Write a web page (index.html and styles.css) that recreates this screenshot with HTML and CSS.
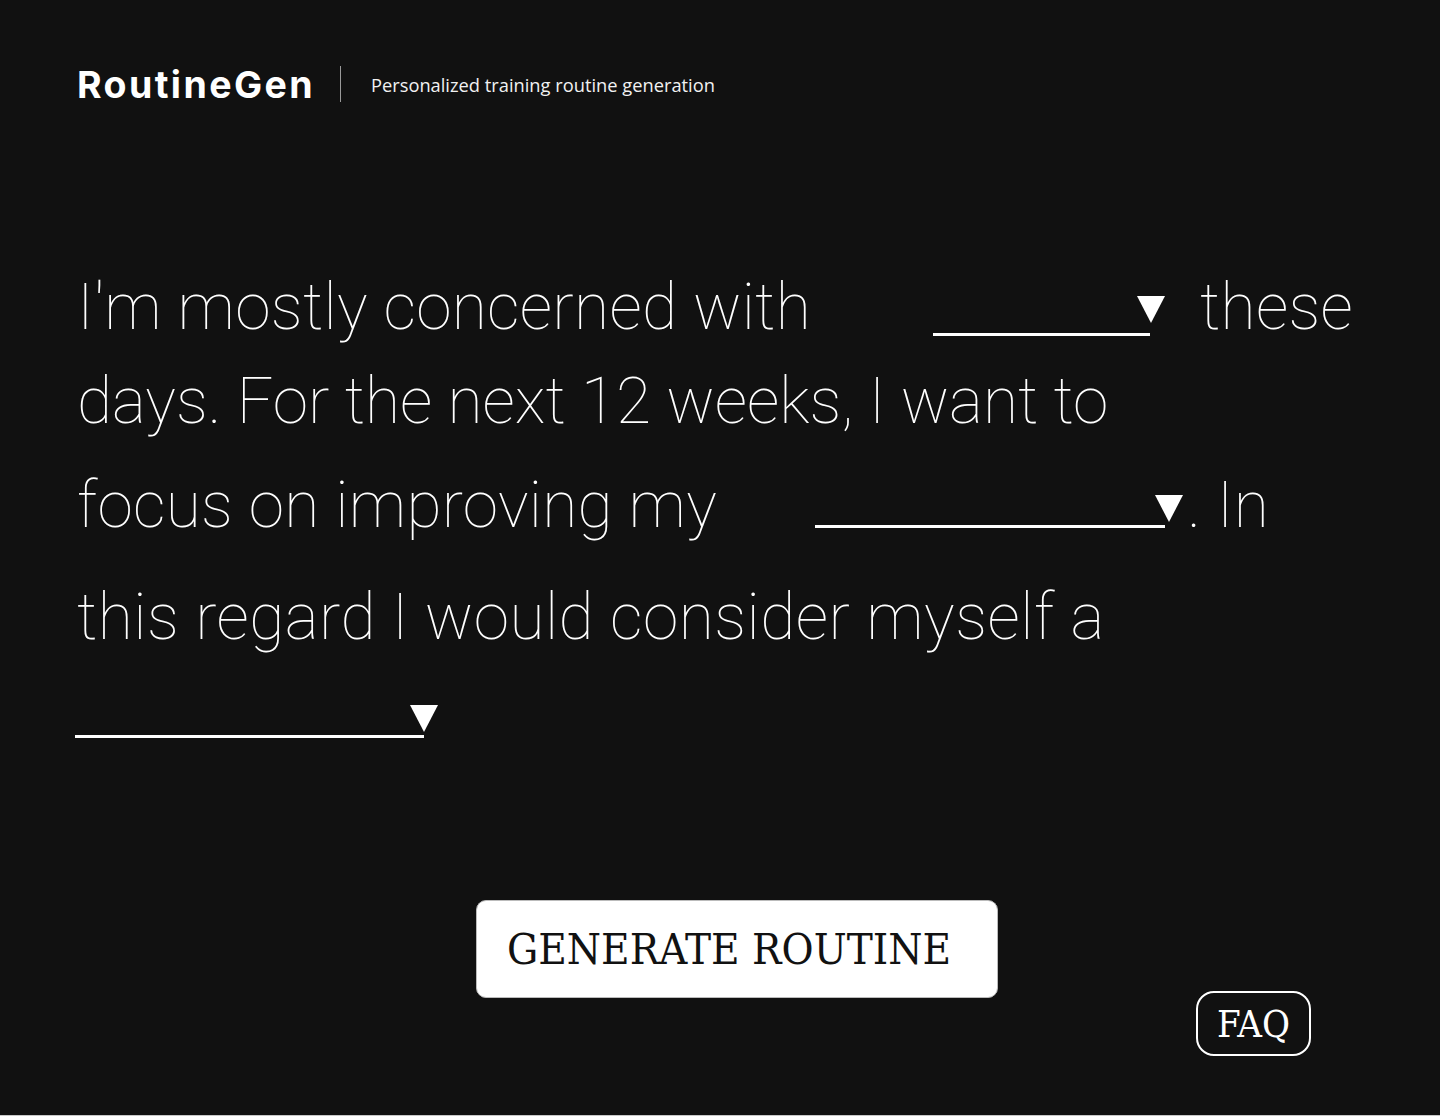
FILE: index.html
```html
<!DOCTYPE html>
<html lang="en">
<head>
<meta charset="utf-8">
<title>RoutineGen</title>
<link rel="stylesheet" href="styles.css">
</head>
<body>
<div class="page">
  <header class="header">
    <div class="brand">RoutineGen</div>
    <div class="sep"></div>
    <div class="tagline">Personalized training routine generation</div>
  </header>

  <div class="prompt">
    <div class="line l1">
      <span class="txt">I'm mostly concerned with</span>
      <span class="select s1"><span class="arrow"></span></span>
      <span class="txt after1">these</span>
    </div>
    <div class="line l2">
      <span class="txt">days. For the next 12 weeks, I want to</span>
    </div>
    <div class="line l3">
      <span class="txt">focus on improving my</span>
      <span class="select s3"><span class="arrow"></span></span>
      <span class="txt after3">. In</span>
    </div>
    <div class="line l4">
      <span class="txt">this regard I would consider myself a</span>
    </div>
    <div class="line l5">
      <span class="select s5"><span class="arrow"></span></span>
    </div>
  </div>

  <div class="actions">
    <button class="generate">GENERATE ROUTINE</button>
    <button class="faq">FAQ</button>
  </div>
</div>
</body>
</html>
```

FILE: styles.css
```css
html { background: #c8c8c8; }
body { margin: 0; }
.page {
  width: 1440px;
  height: 1115px;
  background: #111111;
  box-sizing: border-box;
  padding: 66px 0 0 77px;
  display: flex;
  flex-direction: column;
  color: #fff;
}
.header { display: flex; align-items: center; height: 36px; }
.brand { font-family: Inter, sans-serif; font-weight: 700; font-size: 37.5px; letter-spacing: 2.4px; }
.sep { width: 1px; height: 36px; background: #9a9a9a; margin: 0 30px 0 25px; }
.tagline { font-family: "Open Sans", sans-serif; font-size: 18.3px; color: #f2f2f2; }

.prompt { margin-top: 156px; font-family: Roboto, sans-serif; font-weight: 100; font-size: 64px; letter-spacing: 0.3px; }
.line { display: flex; align-items: flex-start; height: 100px; line-height: 100px; white-space: nowrap; }
.l2 { margin-top: -6px; letter-spacing: 0; }
.l3 { margin-top: 4px; }
.l4 { margin-top: 12px; letter-spacing: 0.5px; }
.l5 { margin-top: 0; }

.select { position: relative; display: block; border-bottom: 3px solid #fff; box-sizing: border-box; }
.s1 { width: 217px; height: 78px; margin-left: 122px; }
.after1 { margin-left: 50px; }
.s3 { width: 350px; height: 72px; margin-left: 98px; }
.after3 { margin-left: 22px; }
.s5 { width: 349px; height: 70px; margin-left: -2px; }
.arrow {
  position: absolute;
  right: -15px;
  width: 0; height: 0;
  border-left: 14px solid transparent;
  border-right: 14px solid transparent;
  border-top: 27px solid #fff;
}
.s1 .arrow { top: 38px; right: -15px; }
.s3 .arrow { top: 39px; right: -18px; }
.s5 .arrow { top: 37px; right: -14px; }

.actions { display: flex; align-items: flex-start; margin-top: 132px; }
button { cursor: pointer; }
.generate {
  margin-left: 399px;
  width: 522px; height: 98px;
  background: #fff; color: #111;
  border: 1px solid #bbb; border-radius: 10px;
  font-family: "DejaVu Serif", serif; font-stretch: condensed;
  font-size: 43.5px; text-align: left; padding: 0 0 0 30px;
}
.faq {
  margin-left: 198px; margin-top: 91px;
  width: 115px; height: 65px;
  background: transparent; color: #fff;
  border: 2px solid #fff; border-radius: 18px;
  font-family: "DejaVu Serif", serif; font-stretch: condensed;
  font-size: 38px; padding: 0;
}
```
